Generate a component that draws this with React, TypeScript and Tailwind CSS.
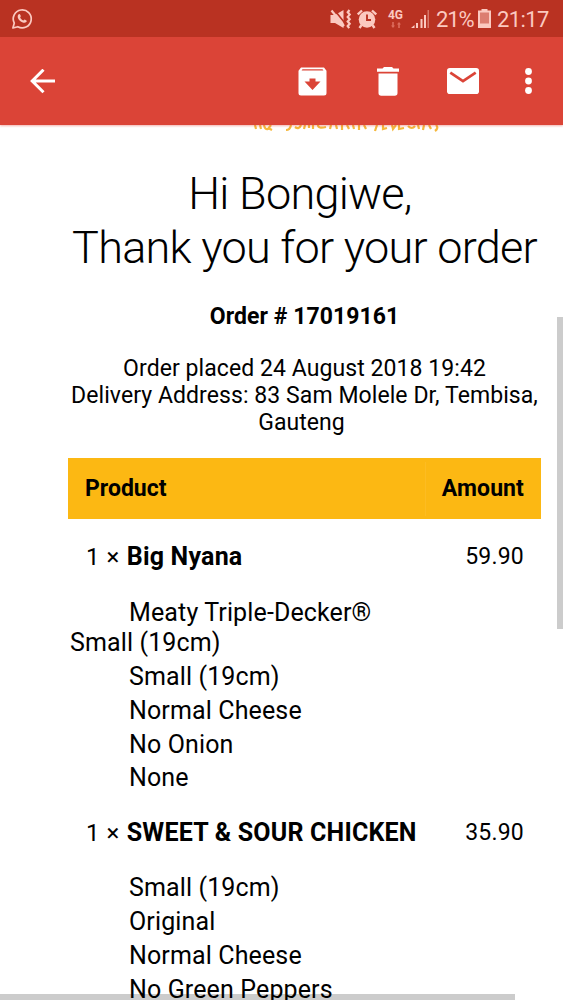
import type { ReactNode } from "react";

interface OrderLine {
  name: string;
  amount: string;
  intro?: string[];
  options: string[];
}

const orderLines: OrderLine[] = [
  {
    name: "Big Nyana",
    amount: "59.90",
    intro: ["Meaty Triple-Decker®", "Small (19cm)"],
    options: ["Small (19cm)", "Normal Cheese", "No Onion", "None"],
  },
  {
    name: "SWEET & SOUR CHICKEN",
    amount: "35.90",
    options: ["Small (19cm)", "Original", "Normal Cheese", "No Green Peppers"],
  },
];

function StatusBar() {
  return (
    <div className="flex h-[37px] shrink-0 items-center bg-[#b93222] text-[#fbc9c0]">
      <svg className="ml-[11px] h-[22px] w-[22px]" viewBox="0 0 22 22" fill="none" stroke="currentColor" strokeWidth="1.7">
        <path d="M1.9 20l1.4-4.9A9 9 0 1 1 6.8 18.7z" strokeLinejoin="round" />
        <path
          d="M7.7 6.3c.6-.5 1.1-.3 1.4.3l.7 1.5c.2.5-.6 1-.6 1.4.5 1.3 1.7 2.4 3.1 2.9.5.1.9-1 1.4-.9l1.7.9c.5.3.4 1.2-.1 1.7-1 .9-2.3.9-3.5.4-2.3-.8-4-2.4-4.9-4.6-.4-1.4-.2-2.7.8-3.6z"
          fill="currentColor"
          stroke="none"
        />
      </svg>
      <div className="ml-auto flex h-full items-center pr-[15px]">
        <svg className="h-[20px] w-[22px]" viewBox="0 0 22 20" fill="currentColor">
          <path d="M.5 6H5l8.500-5v18L5 14H.5z" />
          <path d="M4 .5l12 15" stroke="#b93222" strokeWidth="1.6" />
          <path d="M1.500 1.500l12.500 15.500" stroke="currentColor" strokeWidth="2.2" />
          <path
            d="M19.500 1l-1.800 2.300 2 2.300-2 2.300 2 2.300-2 2.300 2 2.300-2 2.300 1.500 2"
            fill="none"
            stroke="currentColor"
            strokeWidth="2.2"
          />
        </svg>
        <svg className="ml-[5px] h-5 w-5" viewBox="0 0 20 20" fill="currentColor">
          <circle cx="10" cy="10.5" r="8.3" />
          <path d="M.8 5.500L5 1.500M19.200 5.500L15 1.500M4.500 16l-2 3M15.500 16l2 3" stroke="currentColor" strokeWidth="2.4" />
          <path d="M10 5.500v5.500h4" fill="none" stroke="#b93222" strokeWidth="1.9" />
        </svg>
        <div className="ml-[10px] flex w-[17px] flex-col items-center">
          <span className="text-[12px] leading-[11px] font-bold">4G</span>
          <svg className="mt-px h-[6px] w-[10px] text-[#dd6c5e]" viewBox="0 0 10 6" fill="currentColor">
            <path d="M2 6L0 3.500h1.200V0h1.600v3.500H4zM8 0l2 2.500H8.800V6H7.200V2.500H6z" />
          </svg>
        </div>
        <svg className="ml-[7px] h-[18px] w-[18px]" viewBox="0 0 18 18" fill="currentColor">
          <path d="M0 18l3.500-3v3zM5 13h2v5H5zM9.500 9h2v9h-2zM13 5h2v13h-2z" />
          <path d="M16.500 0H18v18h-1.500z" opacity="0.45" />
        </svg>
        <span className="ml-[7px] w-[38px] pt-0.5 text-[22px] leading-[37px] tracking-[-1.1px] whitespace-nowrap">21%</span>
        <svg className="ml-1 h-[19px] w-[13px]" viewBox="0 0 13 19" fill="currentColor">
          <path d="M3.500 0h6v2h-6zM0 1.500h13V19H0z" />
          <path d="M2 3.500h9v11H2z" fill="#dc7d70" />
        </svg>
        <span className="ml-[6px] w-[51px] pt-0.5 text-[22px] leading-[37px] tracking-[-0.6px] whitespace-nowrap">21:17</span>
      </div>
    </div>
  );
}

function ActionBar() {
  return (
    <div className="z-10 flex h-[88px] shrink-0 items-center bg-[#db4437] text-white shadow-[0_1px_2px_rgba(219,68,55,0.4)]">
      <svg className="ml-[30px] h-[25px] w-[25px]" viewBox="0 0 25 25" fill="none" stroke="currentColor" strokeWidth="3">
        <path d="M25 12H3M13.500.7L2.200 12l11.300 11.300" />
      </svg>
      <svg className="ml-auto h-[29px] w-[29px]" viewBox="0 0 29 29" fill="currentColor">
        <path
          fillRule="evenodd"
          d="M3 .5h23l2.500 3.300V26a2.500 2.500 0 0 1-2.500 2.500H3A2.500 2.500 0 0 1 .5 26V3.800zM4.500 2.300L3.600 3.500h21.800l-.9-1.200zM11.500 11.500v3H6.500l8 8.500 8-8.500h-5v-3z"
        />
      </svg>
      <svg className="ml-[50px] h-[29px] w-[22px]" viewBox="0 0 22 29" fill="currentColor">
        <path d="M0 1.500h5.500L7 0h8l1.500 1.500H22v3.300H0zM1.500 6.500h19V26a2.700 2.700 0 0 1-2.700 2.700H4.200A2.700 2.700 0 0 1 1.500 26z" />
      </svg>
      <svg className="ml-[48px] h-[26px] w-[32px]" viewBox="0 0 32 26" fill="currentColor">
        <rect width="32" height="26" rx="2.8" />
        <path d="M3.300 4.700L16 13.200 28.700 4.700" fill="none" stroke="#db4437" strokeWidth="2.7" />
      </svg>
      <svg className="mr-[31px] ml-[46px] h-[26px] w-[7px]" viewBox="0 0 7 26" fill="currentColor">
        <circle cx="3.5" cy="3.5" r="3.4" />
        <circle cx="3.5" cy="13" r="3.4" />
        <circle cx="3.5" cy="22.5" r="3.4" />
      </svg>
    </div>
  );
}

function Option({ children }: { children: ReactNode }) {
  return <li className="pl-[59px] leading-[33.8px]">{children}</li>;
}

function OrderItem({ line }: { line: OrderLine }) {
  return (
    <section>
      <div className="flex h-[30px] justify-between pr-[17px] pl-[18px] text-[23px] leading-[30px]">
        <span className="whitespace-nowrap">
          <span className="mr-[7px] text-[24px] tracking-[0.5px]">1 ×</span>
          <b className="text-[25px] font-bold tracking-[0.2px]">{line.name}</b>
        </span>
        <span className="tracking-[0.2px]">{line.amount}</span>
      </div>
      <ul className="mt-[23px] pl-[2px] text-[25px] tracking-[0.13px]">
        {line.intro && (
          <li className="mt-[26px] mb-[2px] leading-[30px]">
            <span className="ml-[59px]">{line.intro[0]}</span>
            <br />
            {line.intro[1]}
          </li>
        )}
        {line.options.map((option) => (
          <Option key={option}>{option}</Option>
        ))}
      </ul>
    </section>
  );
}

export default function App() {
  return (
    <div className="relative flex h-[1000px] w-[563px] flex-col overflow-hidden bg-white font-['Roboto',sans-serif] text-black">
      <StatusBar />
      <ActionBar />
      <main className="flex h-[875px] flex-col overflow-hidden">
        {/* lower edge of the tagline, scrolled under the bar */}
        <svg className="ml-[252px] h-[7px] w-[190px] shrink-0" viewBox="0 0 190 7" fill="none" stroke="#f5b83d" strokeWidth="2.2">
          <path d="M3 0l1 4M8 0l1 4M12 0q1 5 4 4l3-4M16 3l4 2M34 5q4 0 5-5M43 2q4 3 6-2M53 0l-1 4M57 0v3M61 0v4M66 0q0 4 8 2M79 0l-1 4M84 0l1 4M90 0v5M95 0l2 4M101 0l1 4M107 0v5M112 0l2 4M125 0l-2 6M131 0v4l4-1M140 0l1 4 3-4M147 0v4l5-1M156 1q4 4 7 0M166 0l1 4M172 0l-1 5M177 0l2 4M184 0q3 3-1 6" />
        </svg>
        <div className="mt-[35px] ml-[68px] w-[473px]">
          <h1 className="text-center text-[45px] leading-[54px] font-light tracking-[-0.72px] whitespace-nowrap">
            <span className="mr-[9px]">Hi Bongiwe,</span>
            <br />
            Thank you for your order
          </h1>
          <p className="mt-[28px] text-center text-[23px] leading-[27px] font-bold tracking-[0.05px]">Order # 17019161</p>
          <p className="mt-[25px] text-center text-[23px] leading-[27px] tracking-[0.07px] whitespace-nowrap">
            Order placed 24 August 2018 19:42
            <br />
            Delivery Address: 83 Sam Molele Dr, Tembisa,
            <br />
            <span className="mr-[6px]">Gauteng</span>
          </p>
          <div className="mt-[22px] flex h-[60.5px] items-center justify-between bg-[#fcb813] pt-0.5 text-[23px] font-bold">
            <span className="pl-[17px]">Product</span>
            <span className="flex h-[54px] items-center border-l border-[#fdbc22] pr-[17px] pl-4 tracking-[0.1px]">Amount</span>
          </div>
          <div className="mt-[23.5px] flex flex-col gap-[23px]">
            {orderLines.map((line) => (
              <OrderItem key={line.name} line={line} />
            ))}
          </div>
        </div>
      </main>
      <div className="absolute top-[317px] right-0 h-[312px] w-[6px] bg-black/20" />
      <div className="absolute bottom-0 left-0 h-[6px] w-[515px] bg-black/20" />
    </div>
  );
}
